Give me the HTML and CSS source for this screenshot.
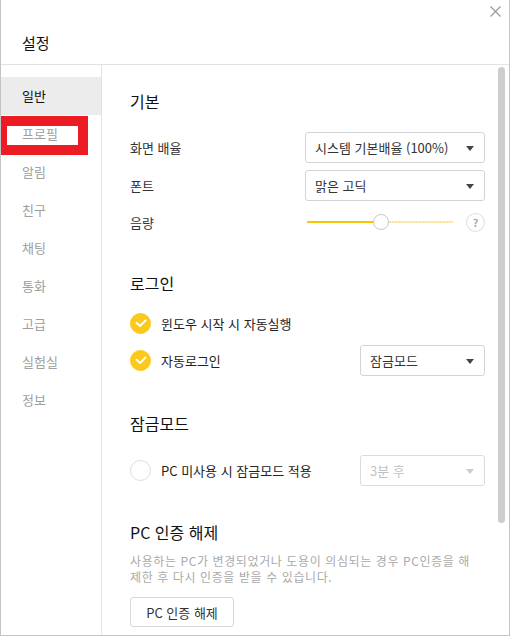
FILE: index.html
```html
<!DOCTYPE html>
<html lang="ko">
<head>
  <meta charset="UTF-8">
  <title>설정</title>
  <link rel="stylesheet" href="styles.css">
</head>
<body>
  <div class="window">
    <div class="titlebar">
      <h1 class="title">설정</h1>
      <button class="close-btn" aria-label="닫기">
        <svg width="11" height="11" viewBox="0 0 11 11"><path d="M0.5 0.5 L10.5 10.5 M10.5 0.5 L0.5 10.5" stroke="#9a9a9a" stroke-width="1.2" fill="none"/></svg>
      </button>
    </div>

    <div class="body">
      <ul class="sidebar">
        <li class="menu-item active">일반</li>
        <li class="menu-item">프로필</li>
        <li class="menu-item">알림</li>
        <li class="menu-item">친구</li>
        <li class="menu-item">채팅</li>
        <li class="menu-item">통화</li>
        <li class="menu-item">고급</li>
        <li class="menu-item">실험실</li>
        <li class="menu-item">정보</li>
      </ul>

      <div class="content">
        <div class="main">
          <h2 class="section-title first">기본</h2>
          <div class="row">
            <span class="label">화면 배율</span>
            <div class="select wide">시스템 기본배율 (100%)<span class="arrow"></span></div>
          </div>
          <div class="row">
            <span class="label">폰트</span>
            <div class="select wide">맑은 고딕<span class="arrow"></span></div>
          </div>
          <div class="row short">
            <span class="label">음량</span>
            <div class="volume">
              <div class="slider">
                <div class="fill"></div>
                <div class="thumb"></div>
                <div class="rest"></div>
              </div>
              <span class="help">?</span>
            </div>
          </div>

          <h2 class="section-title">로그인</h2>
          <div class="check-row">
            <span class="check on"><svg width="12" height="9" viewBox="0 0 12 9"><path d="M1.5 3.8 L5 7 L10.5 1.5" stroke="#fff" stroke-width="2" fill="none" stroke-linecap="round" stroke-linejoin="round"/></svg></span>
            <span class="check-label">윈도우 시작 시 자동실행</span>
          </div>
          <div class="row login">
            <div class="check-group">
              <span class="check on"><svg width="12" height="9" viewBox="0 0 12 9"><path d="M1.5 3.8 L5 7 L10.5 1.5" stroke="#fff" stroke-width="2" fill="none" stroke-linecap="round" stroke-linejoin="round"/></svg></span>
              <span class="check-label">자동로그인</span>
            </div>
            <div class="select narrow">잠금모드<span class="arrow"></span></div>
          </div>

          <h2 class="section-title">잠금모드</h2>
          <div class="row lock">
            <div class="check-group">
              <span class="check"></span>
              <span class="check-label">PC 미사용 시 잠금모드 적용</span>
            </div>
            <div class="select narrow disabled">3분 후<span class="arrow"></span></div>
          </div>

          <h2 class="section-title">PC 인증 해제</h2>
          <p class="desc">사용하는 PC가 변경되었거나 도용이 의심되는 경우 PC인증을 해제한 후 다시 인증을 받을 수 있습니다.</p>
          <button class="plain-btn">PC 인증 해제</button>
        </div>
        <div class="scrollbar"><div class="scroll-thumb"></div></div>
      </div>
    </div>

    <div class="marker"></div>
  </div>
</body>
</html>
```

FILE: styles.css
```css
* {
  box-sizing: border-box;
}
body {
  margin: 0;
  background: #fff;
  font-family: "Noto Sans CJK KR", "Noto Sans", sans-serif;
  color: #222;
}
.window {
  position: relative;
  width: 510px;
  height: 636px;
  border: 1px solid #c4c4c4;
  border-top: none;
  overflow: hidden;
}
.titlebar {
  position: relative;
  height: 65px;
  border-bottom: 1px solid #e3e3e3;
  padding: 32px 0 0 21px;
}
.title {
  margin: 0;
  font-size: 15px;
  font-weight: normal;
  line-height: 22px;
  color: #111;
}
.close-btn {
  position: absolute;
  top: 5px;
  right: 8px;
  border: none;
  background: none;
  padding: 0;
  width: 11px;
  height: 11px;
}
.body {
  display: flex;
  height: 570px;
}
.sidebar {
  list-style: none;
  margin: 0;
  padding: 12px 0 0;
  width: 101px;
  border-right: 1px solid #e3e3e3;
}
.menu-item {
  height: 38px;
  line-height: 38px;
  padding-left: 21px;
  font-size: 13px;
  color: #a0a0a0;
}
.menu-item.active {
  background: #ececec;
  color: #111;
}
.content {
  flex: 1;
  display: flex;
}
.main {
  flex: 1;
  padding: 25px 11px 0 28px;
}
.section-title {
  margin: 36px 0 0;
  font-size: 16px;
  font-weight: normal;
  line-height: 22px;
  color: #111;
}
.section-title.first {
  margin-top: 0;
}
.row {
  display: flex;
  align-items: center;
  justify-content: space-between;
  height: 31px;
  margin-top: 7px;
}
.section-title + .row {
  margin-top: 20px;
}
.row.short {
  height: 28px;
}
.label {
  font-size: 13px;
  color: #333;
}
.select {
  position: relative;
  height: 31px;
  line-height: 29px;
  border: 1px solid #d4d4d4;
  border-radius: 3px;
  padding-left: 9px;
  font-size: 13px;
  color: #333;
}
.select.wide {
  width: 180px;
}
.select.narrow {
  width: 125px;
}
.select.disabled {
  color: #c2c2c2;
  border-color: #dcdcdc;
}
.arrow {
  position: absolute;
  right: 10px;
  top: 13px;
  border-left: 4px solid transparent;
  border-right: 4px solid transparent;
  border-top: 5px solid #444;
}
.select.disabled .arrow {
  border-top-color: #ccc;
}
.volume {
  display: flex;
  align-items: center;
  width: 179px;
}
.slider {
  position: relative;
  display: flex;
  align-items: center;
  width: 147px;
  height: 16px;
  margin-left: 1px;
}
.fill {
  width: 66px;
  height: 2px;
  background: #f7c600;
}
.thumb {
  width: 16px;
  height: 16px;
  border: 1px solid #c8c8c8;
  border-radius: 50%;
  background: #fff;
}
.rest {
  flex: 1;
  height: 2px;
  background: repeating-linear-gradient(90deg, #fbe39a 0 2px, #fdf1c8 2px 3px);
}
.help {
  margin-left: 13px;
  width: 19px;
  height: 19px;
  border: 1px solid #dedede;
  border-radius: 50%;
  font-size: 11px;
  line-height: 17px;
  text-align: center;
  color: #aaa;
  font-weight: bold;
}
.check-row,
.check-group {
  display: flex;
  align-items: center;
}
.check-row {
  height: 22px;
  margin-top: 18px;
}
.row.login {
  margin-top: 11px;
}
.row.lock {
  margin-top: 21px;
  height: 30px;
}
.check {
  display: flex;
  align-items: center;
  justify-content: center;
  width: 21px;
  height: 21px;
  border-radius: 50%;
  border: 1px solid #dcdcdc;
  margin-right: 10px;
}
.check.on {
  background: #fcc81c;
  border-color: #fcc81c;
}
.check-label {
  font-size: 13px;
  color: #222;
}
.desc {
  margin: 10px 0 0;
  font-size: 12px;
  line-height: 16px;
  color: #aaa;
  padding-right: 4px;
  letter-spacing: 0.6px;
  word-break: break-all;
}
.plain-btn {
  margin-top: 12px;
  width: 104px;
  height: 30px;
  border: 1px solid #d8d8d8;
  border-radius: 3px;
  background: #fff;
  font-family: inherit;
  font-size: 13px;
  color: #333;
  padding: 0;
}
.scrollbar {
  width: 13px;
  padding: 2px 0 0 2px;
}
.scroll-thumb {
  width: 7px;
  height: 456px;
  border-radius: 4px;
  background: #cdcdcd;
}
.marker {
  position: absolute;
  left: 0;
  top: 116px;
  width: 87px;
  height: 39px;
  border-style: solid;
  border-color: #ed1c24;
  border-width: 10px 10px 10px 6px;
}
```
